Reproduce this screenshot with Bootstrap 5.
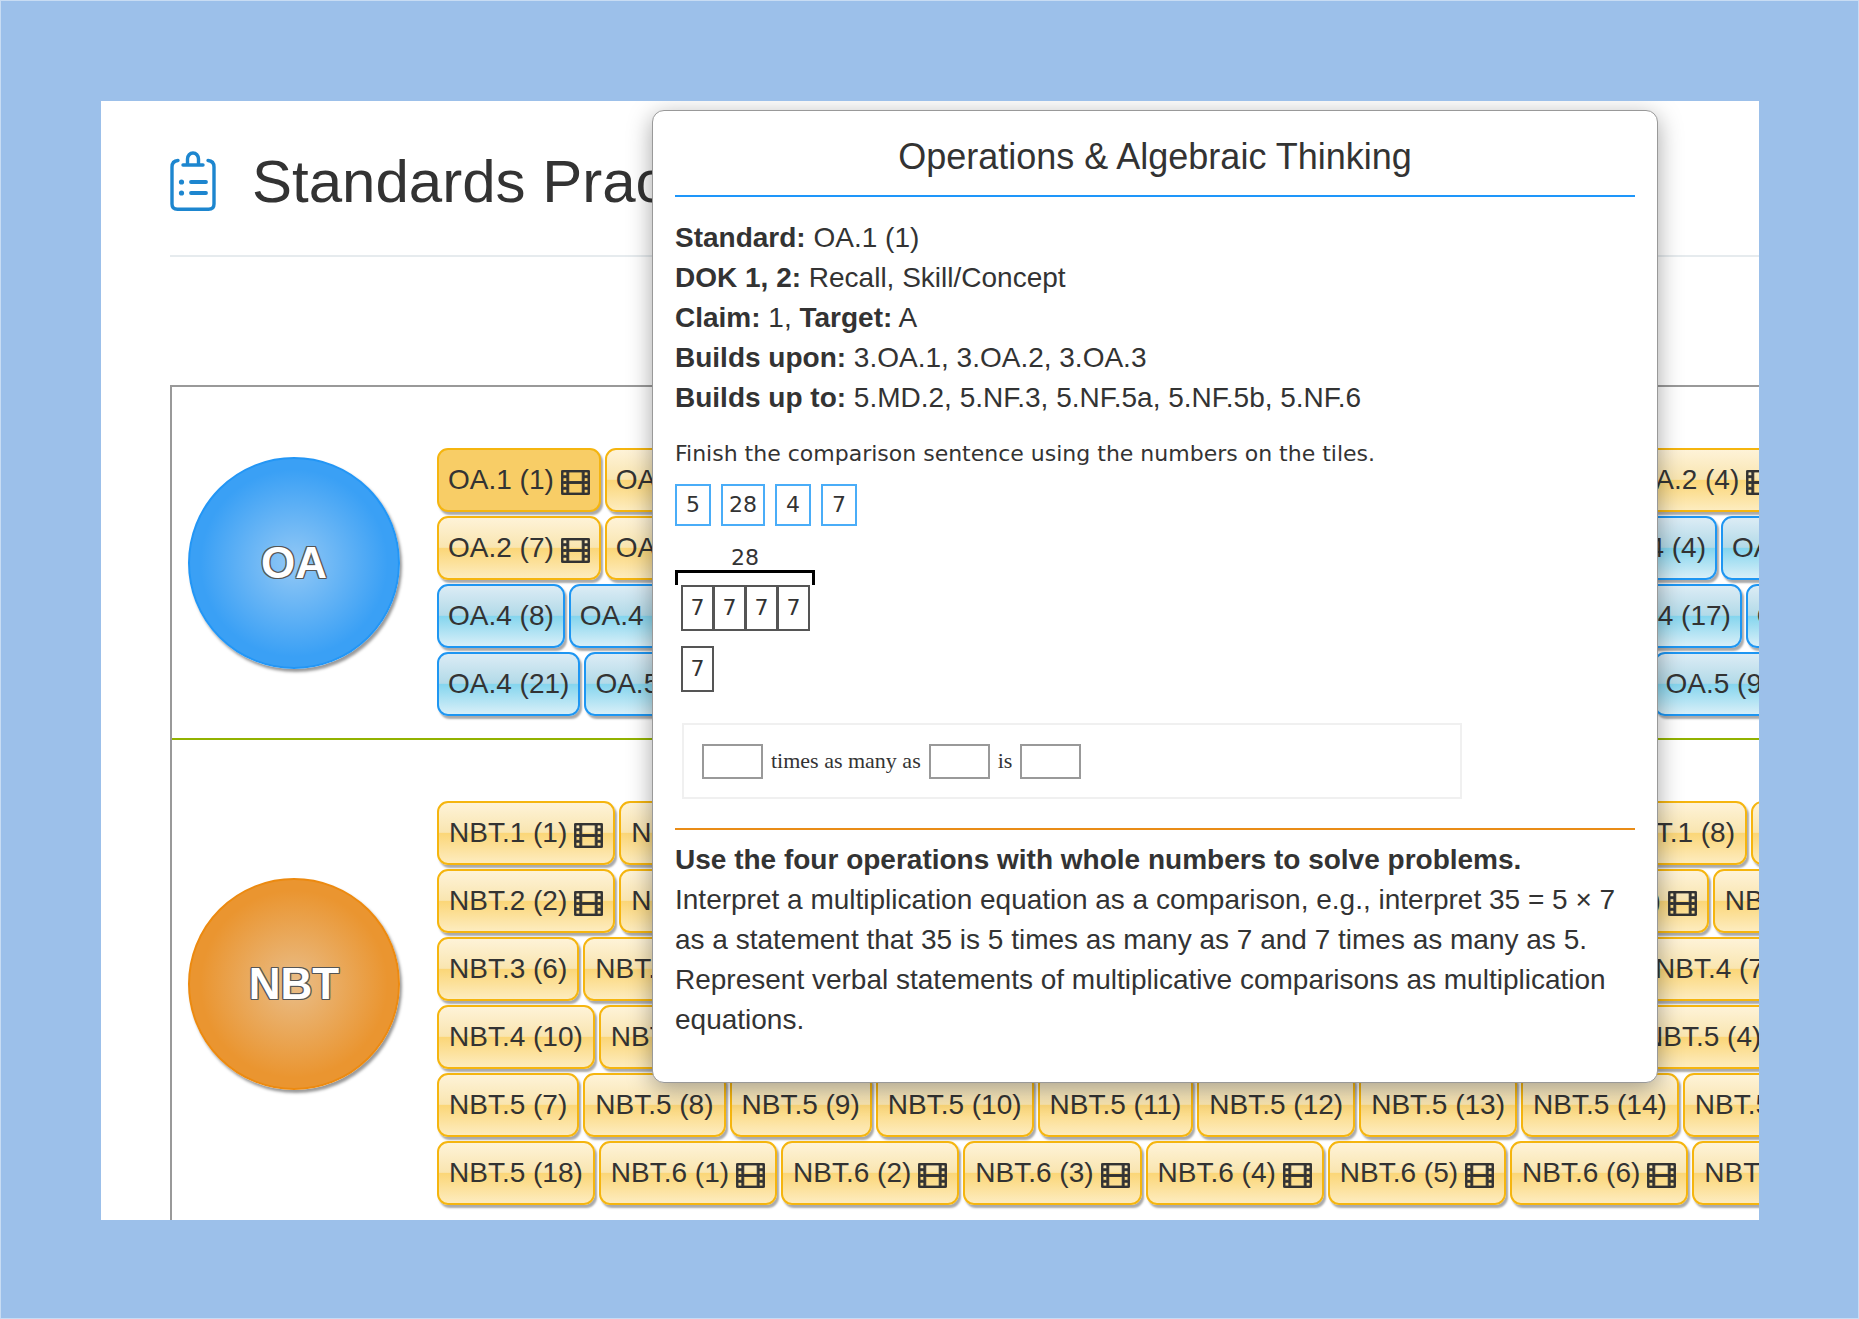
<!DOCTYPE html>
<html lang="en">
<head>
<meta charset="utf-8">
<meta name="viewport" content="width=device-width, initial-scale=1">
<title>Standards Practice</title>
<link href="https://cdn.jsdelivr.net/npm/bootstrap@5.3.0/dist/css/bootstrap.min.css" rel="stylesheet">
<style>
  body { background: #9cc0ea; color: #333; font-family: "Liberation Sans", Arial, sans-serif; }
  .stage { height: 100vh; padding: 100px 99px 98px 100px; border: 1px solid #c8dcf3; }
  .sheet { padding: 50px 0 0 69px; }

  .page-head { gap: 36px; padding-bottom: 42px; border-bottom: 2px solid #e6ebee; margin-bottom: 128px; }
  .page-head h1 { font-size: 60px; line-height: 62px; }
  .page-head svg { width: 46px; height: 60px; }

  .board { border: 2px solid #999; border-width: 2px 0 0 2px; min-height: 900px; }
  .domain { border-bottom: 2px solid #92b200; }
  .domain-mark { flex: 0 0 265px; padding-left: 16px; }
  .disc { width: 212px; height: 212px; border: 2px solid; box-shadow: 2px 3px 3px #999; color: #fff; font-size: 44px; font-weight: 700;
    text-shadow: 1px 1px 0 #555, -1px 1px 0 #555, 1px -1px 0 #555, -1px -1px 0 #555, 1px 0 1px #555, -1px 0 1px #555; }
  .disc-blue { border-color: #2396f5; background: radial-gradient(circle closest-side, #92c8f5 0%, #3aa0f5 90%); }
  .disc-orange { border-color: #ec8a10; background: radial-gradient(circle closest-side, #e9bd88 0%, #ea9530 90%); }

  .rows { padding: 61px 0 22px; gap: 4px; }
  .rows > div { gap: 4px; }
  .std { flex: none; height: 64px; padding: 0 9px; border: 2px solid #f5b50f; border-radius: 11px; color: #333; font-size: 28px; line-height: 32px; white-space: nowrap;
    display: flex; align-items: center; gap: 7px;
    background: linear-gradient(#fef3d8 0%, #f9e5b0 49%, #fbd677 50%, #fdecbf 100%); box-shadow: 2px 3px 2px #aaa; }
  .rows-roomy .std { padding: 0 10px; }
  .std.is-blue { border-color: #1e96f2; background: linear-gradient(#dcecf5 0%, #b2dae8 49%, #84d5ee 50%, #d8eff8 100%); }
  .std.is-on { background: #f8cd66; }
  .std svg { width: 29px; height: 25px; margin-top: 4px; }

  .tip { top: 9px; left: 551px; width: 1006px; padding: 26px 22px 42px; background: #fff; border: 1px solid #999; border-radius: 12px; box-shadow: 0 6px 24px rgba(0,0,0,.35); font-size: 28px; line-height: 40px; }
  .tip h2 { font-size: 36px; line-height: 40px; padding-bottom: 18px; border-bottom: 2px solid #1e96fa; margin-bottom: 21px; }
  .task { font-family: "DejaVu Sans", Verdana, sans-serif; font-size: 22px; line-height: 26px; margin-top: 23px; }
  .tiles { gap: 10px; margin-top: 17px; }
  .tiles button { height: 42px; padding: 0 6px; border: 2px solid #4aadf8; background: #fff; color: #333; min-width: 36px; }
  .model { width: 140px; margin-top: 20px; }
  .model-total { line-height: 24px; }
  .brace { height: 15px; border: 3px solid #000; border-bottom: 0; }
  .cell { width: 33px; height: 46px; border: 2px solid #555; margin-right: -1px; }
  .cells { padding-left: 6px; }
  .cells + .cells { margin-top: 15px; }
  .answer { margin: 31px 0 29px 7px; width: 780px; height: 76px; padding: 0 18px; border: 2px solid #f0f0f0; gap: 8px; font-family: "Liberation Serif", "Times New Roman", serif; font-size: 22px; line-height: 26px; }
  .answer input { width: 61px; height: 35px; border: 2px solid #999; }
  .detail { border-top: 2px solid #e98c17; padding-top: 10px; }
</style>
</head>
<body>
<svg class="d-none" aria-hidden="true">
  <symbol id="film" viewBox="0 0 1920 1664">
    <path fill="#333" stroke="#333" stroke-width="64" fill-rule="evenodd" d="M160 0H1760Q1920 0 1920 160V1504Q1920 1664 1760 1664H160Q0 1664 0 1504V160Q0 0 160 0Z
      M190 128h132q62 0 62 62v132q0 62-62 62h-132q-62 0-62-62v-132q0-62 62-62Z M190 512h132q62 0 62 62v132q0 62-62 62h-132q-62 0-62-62v-132q0-62 62-62Z
      M190 896h132q62 0 62 62v132q0 62-62 62h-132q-62 0-62-62v-132q0-62 62-62Z M190 1280h132q62 0 62 62v132q0 62-62 62h-132q-62 0-62-62v-132q0-62 62-62Z
      M1598 128h132q62 0 62 62v132q0 62-62 62h-132q-62 0-62-62v-132q0-62 62-62Z M1598 512h132q62 0 62 62v132q0 62-62 62h-132q-62 0-62-62v-132q0-62 62-62Z
      M1598 896h132q62 0 62 62v132q0 62-62 62h-132q-62 0-62-62v-132q0-62 62-62Z M1598 1280h132q62 0 62 62v132q0 62-62 62h-132q-62 0-62-62v-132q0-62 62-62Z
      M574 128H1346q62 0 62 62V706q0 62-62 62H574q-62 0-62-62V190q0-62 62-62Z M574 896H1346q62 0 62 62V1474q0 62-62 62H574q-62 0-62-62V958q0-62 62-62Z"/>
  </symbol>
</svg>

<div class="stage">
  <main class="sheet bg-white position-relative overflow-hidden h-100">
    <header class="page-head d-flex align-items-start">
      <svg viewBox="0 0 46 60" fill="none" stroke="#1d86cf" stroke-width="3.4" stroke-linecap="round" aria-hidden="true">
        <path d="M8 9.5Q2 10 2 16V53Q2 58.300 7.500 58.300H38.500Q44 58.300 44 53V16Q44 10 38 9.500"/>
        <path d="M13 14H33"/><path d="M17.500 13V8a5.500 6 0 0 1 11 0V13"/>
        <path d="M21 31H36M21 42H36" stroke-width="3.800"/>
        <g fill="#1d86cf" stroke="none"><circle cx="11.500" cy="31" r="2.600"/><circle cx="11.500" cy="42" r="2.600"/></g>
      </svg>
      <h1 class="m-0 fw-normal">Standards Practice</h1>
    </header>

    <div class="board">
      <section class="domain d-flex" aria-label="Operations and Algebraic Thinking">
        <div class="domain-mark d-flex align-items-center">
          <div class="disc disc-blue rounded-circle d-flex align-items-center justify-content-center">OA</div>
        </div>
        <div class="rows d-flex flex-column">
          <div class="d-flex" data-row="OA.1 (1)*!|OA.1 (2)*|OA.1 (10)*|OA.1 (12)*|OA.1 (13)|OA.2 (1)*|OA.2 (3)*|OA.2 (4)*"></div>
          <div class="d-flex" data-row="OA.2 (7)*|OA.2 (8)*|OA.2 (9)*|OA.2 (11)*|OA.3 (1)*|OA.3 (2)*|OA.4 (3)~|OA.4 (4)~|OA.4 (5)~"></div>
          <div class="d-flex" data-row="OA.4 (8)~|OA.4 (10)~|OA.4 (11)~|OA.4 (12)~|OA.4 (13)~|OA.4 (14)~|OA.4 (15)~|OA.4 (16)~|OA.4 (17)~|OA.4 (18)~"></div>
          <div class="d-flex" data-row="OA.4 (21)~|OA.5 (1)~|OA.5 (2)~|OA.5 (3)~|OA.5 (4)~|OA.5 (5)~|OA.5 (6)~|OA.5 (7)~|OA.5 (10)~|OA.5 (9)~"></div>
        </div>
      </section>
      <section class="domain d-flex" aria-label="Number and Operations in Base Ten">
        <div class="domain-mark d-flex align-items-center">
          <div class="disc disc-orange rounded-circle d-flex align-items-center justify-content-center">NBT</div>
        </div>
        <div class="rows rows-roomy d-flex flex-column">
          <div class="d-flex" data-row="NBT.1 (1)*|NBT.1 (2)*|NBT.1 (3)*|NBT.1 (4)*|NBT.1 (5)|NBT.1 (6)|NBT.1 (7)|NBT.1 (8)|NBT.1 (9)"></div>
          <div class="d-flex" data-row="NBT.2 (2)*|NBT.2 (3)*|NBT.2 (4)*|NBT.2 (5)*|NBT.2 (6)*|NBT.2 (7)*|NBT.2 (8)*|NBT.3 (1)"></div>
          <div class="d-flex" data-row="NBT.3 (6)|NBT.3 (7)|NBT.4 (1)*|NBT.4 (2)|NBT.4 (3)|NBT.4 (4)|NBT.4 (5)|NBT.4 (6)|NBT.4 (7)"></div>
          <div class="d-flex" data-row="NBT.4 (10)|NBT.4 (12)|NBT.4 (13)|NBT.4 (14)|NBT.5 (1)*|NBT.5 (2)*|NBT.5 (3)*|NBT.5 (4)"></div>
          <div class="d-flex" data-row="NBT.5 (7)|NBT.5 (8)|NBT.5 (9)|NBT.5 (10)|NBT.5 (11)|NBT.5 (12)|NBT.5 (13)|NBT.5 (14)|NBT.5 (15)"></div>
          <div class="d-flex" data-row="NBT.5 (18)|NBT.6 (1)*|NBT.6 (2)*|NBT.6 (3)*|NBT.6 (4)*|NBT.6 (5)*|NBT.6 (6)*|NBT.6 (7)*"></div>
        </div>
      </section>
    </div>

    <aside class="tip position-absolute" role="tooltip">
      <h2 class="text-center fw-normal">Operations &amp; Algebraic Thinking</h2>
      <div><strong>Standard:</strong> OA.1 (1)</div>
      <div><strong>DOK 1, 2:</strong> Recall, Skill/Concept</div>
      <div><strong>Claim:</strong> 1, <strong>Target:</strong> A</div>
      <div><strong>Builds upon:</strong> 3.OA.1, 3.OA.2, 3.OA.3</div>
      <div><strong>Builds up to:</strong> 5.MD.2, 5.NF.3, 5.NF.5a, 5.NF.5b, 5.NF.6</div>
      <div class="task">
        <div>Finish the comparison sentence using the numbers on the tiles.</div>
        <div class="tiles d-flex">
          <button type="button">5</button><button type="button">28</button><button type="button">4</button><button type="button">7</button>
        </div>
        <div class="model">
          <div class="model-total text-center">28</div>
          <div class="brace"></div>
          <div class="cells d-flex">
            <div class="cell d-flex align-items-center justify-content-center">7</div>
            <div class="cell d-flex align-items-center justify-content-center">7</div>
            <div class="cell d-flex align-items-center justify-content-center">7</div>
            <div class="cell d-flex align-items-center justify-content-center">7</div>
          </div>
          <div class="cells d-flex">
            <div class="cell d-flex align-items-center justify-content-center">7</div>
          </div>
        </div>
      </div>
      <div class="answer d-flex align-items-center">
        <input type="text" id="a1" aria-label="First number"><label for="a2">times as many as</label><input type="text" id="a2"><label for="a3">is</label><input type="text" id="a3">
      </div>
      <div class="detail">
        <div class="fw-bold">Use the four operations with whole numbers to solve problems.</div>
        <div>Interpret a multiplication equation as a comparison, e.g., interpret 35 = 5 × 7 as a statement that 35 is 5 times as many as 7 and 7 times as many as 5. Represent verbal statements of multiplicative comparisons as multiplication equations.</div>
      </div>
    </aside>
  </main>
</div>

<script src="https://cdn.jsdelivr.net/npm/bootstrap@5.3.0/dist/js/bootstrap.bundle.min.js"></script>
<script>
  // Flags after a label: * has a video, ~ blue level, ! selected
  document.querySelectorAll('[data-row]').forEach(function (row) {
    row.dataset.row.split('|').forEach(function (item) {
      var b = document.createElement('button');
      b.type = 'button';
      b.className = 'std' + (item.includes('~') ? ' is-blue' : '') + (item.includes('!') ? ' is-on' : '');
      b.innerHTML = '<span>' + item.replace(/[*~!]/g, '') + '</span>' +
        (item.includes('*') ? '<svg aria-hidden="true"><use href="#film"/></svg>' : '');
      row.appendChild(b);
    });
  });
</script>
</body>
</html>
